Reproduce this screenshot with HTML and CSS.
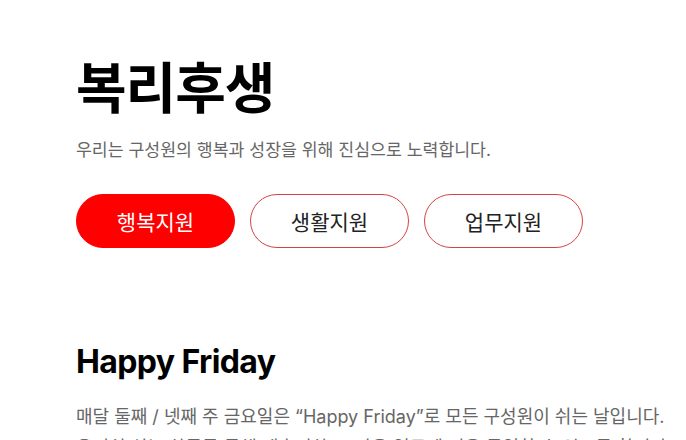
FILE: index.html
```html
<!DOCTYPE html>
<html>
<head>
  <title>복리후생</title>
  <meta charset="UTF-8">
  <link rel="stylesheet" href="styles.css">
</head>
<body>
  <div class="page">
    <h1>복리후생</h1>
    <p class="lead">우리는 구성원의 행복과 성장을 위해 진심으로 노력합니다.</p>

    <div class="tabs">
      <button class="tab active">행복지원</button>
      <button class="tab">생활지원</button>
      <button class="tab">업무지원</button>
    </div>

    <div class="section">
      <h2>Happy Friday</h2>
      <p>매달 둘째 / 넷째 주 금요일은 “Happy Friday”로 모든 구성원이 쉬는 날입니다.<br>
      온전히 쉬는 하루를 통해 재충전하고, 다음 업무에 더욱 몰입할 수 있도록 합니다.</p>
    </div>
  </div>
</body>
</html>
```

FILE: styles.css
```css
body {
  margin: 0;
  font-family: Inter, 'Noto Sans CJK KR', sans-serif;
  color: #111;
  background-color: #fff;
}

.page {
  padding: 52px 16px 0 76px;
}

h1 {
  margin: 0;
  font-size: 55px;
  font-weight: 700;
  line-height: 72px;
  letter-spacing: -1px;
  color: #000;
}

.lead {
  margin: 13px 0 0;
  font-size: 17.25px;
  line-height: 26px;
  color: #666;
  font-weight: 400;
}

.tabs {
  display: flex;
  gap: 15px;
  margin-top: 31px;
}

.tab {
  width: 159px;
  height: 54px;
  border: 1.5px solid #d24545;
  border-radius: 27px;
  background-color: #fff;
  color: #222;
  font-family: 'Noto Sans CJK KR', sans-serif;
  font-size: 21px;
  cursor: pointer;
}

.tab.active {
  background-color: #ff0000;
  border-color: #ff0000;
  color: #fff;
}

.section {
  margin-top: 92px;
}

h2 {
  margin: 0;
  font-size: 32px;
  font-weight: 700;
  line-height: 44px;
  letter-spacing: -0.6px;
  color: #000;
}

.section p {
  margin: 17px 0 0;
  font-size: 18px;
  line-height: 31px;
  color: #666;
  white-space: nowrap;
}
```
